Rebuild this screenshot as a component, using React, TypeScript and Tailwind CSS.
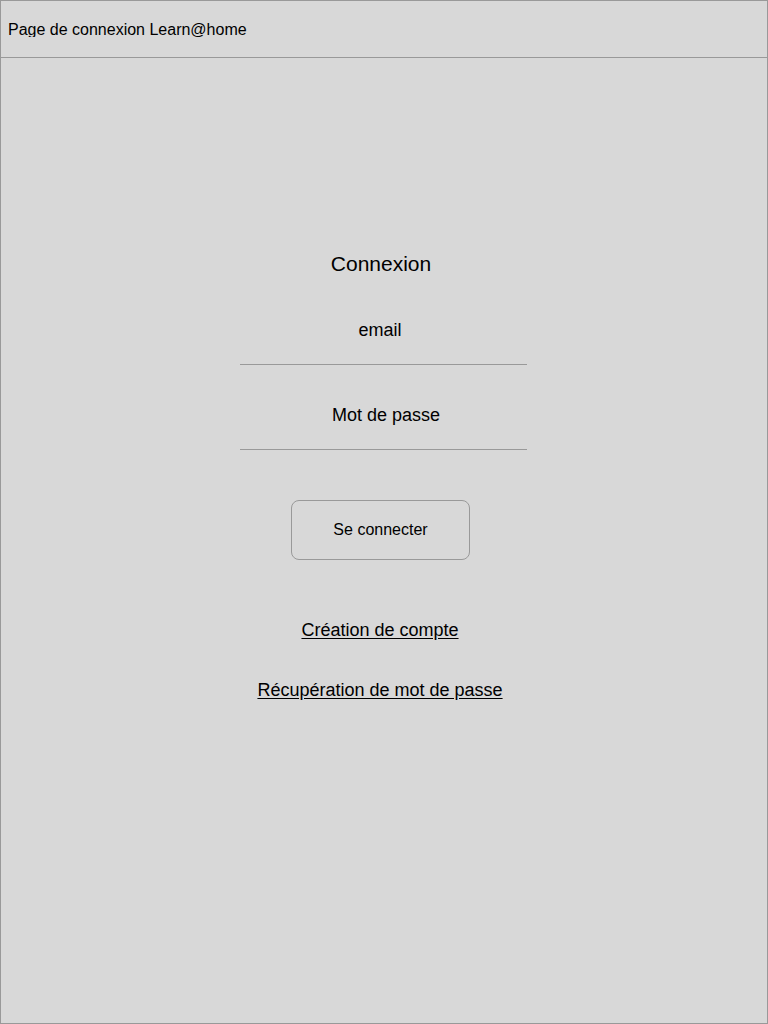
export default function App() {
  return (
    <div className="w-[768px] h-[1024px] bg-[#d8d8d8] border border-[#999999] text-black font-['Liberation_Sans',Arial,sans-serif] overflow-hidden">
      {/* header bar */}
      <header className="h-[57px] border-b border-[#999999]">
        <div className="pt-[21px] pl-[7px]">
          <div className="h-[15px] overflow-hidden text-[16px] leading-[16px] whitespace-nowrap">
            Page de connexion Learn@home
          </div>
        </div>
      </header>

      {/* login form */}
      <main className="flex flex-col items-start">
        <h1 className="mt-[194px] ml-[236px] w-[288px] text-center text-[21px] leading-[24px]">Connexion</h1>
        <div className="mt-[42px] ml-[235px] w-[288px] text-center text-[18px] leading-[24px]">email</div>
        <div className="mt-[22px] ml-[239px] w-[287px] h-px bg-[#999999]" />
        <div className="mt-[38px] ml-[241px] w-[288px] text-center text-[18px] leading-[24px]">Mot de passe</div>
        <div className="mt-[22px] ml-[239px] w-[287px] h-px bg-[#999999]" />
        <button className="mt-[50px] ml-[290px] w-[179px] h-[60px] rounded-[8px] border border-[#999999] flex items-center justify-center text-[16px] leading-[18px]">
          Se connecter
        </button>
        <a href="#" className="mt-[58px] ml-[235px] w-[288px] text-center text-[18px] leading-[24px] underline underline-offset-2">
          Création de compte
        </a>
        <a href="#" className="mt-[36px] ml-[235px] w-[288px] text-center text-[18px] leading-[24px] underline underline-offset-2">
          Récupération de mot de passe
        </a>
      </main>
    </div>
  );
}
